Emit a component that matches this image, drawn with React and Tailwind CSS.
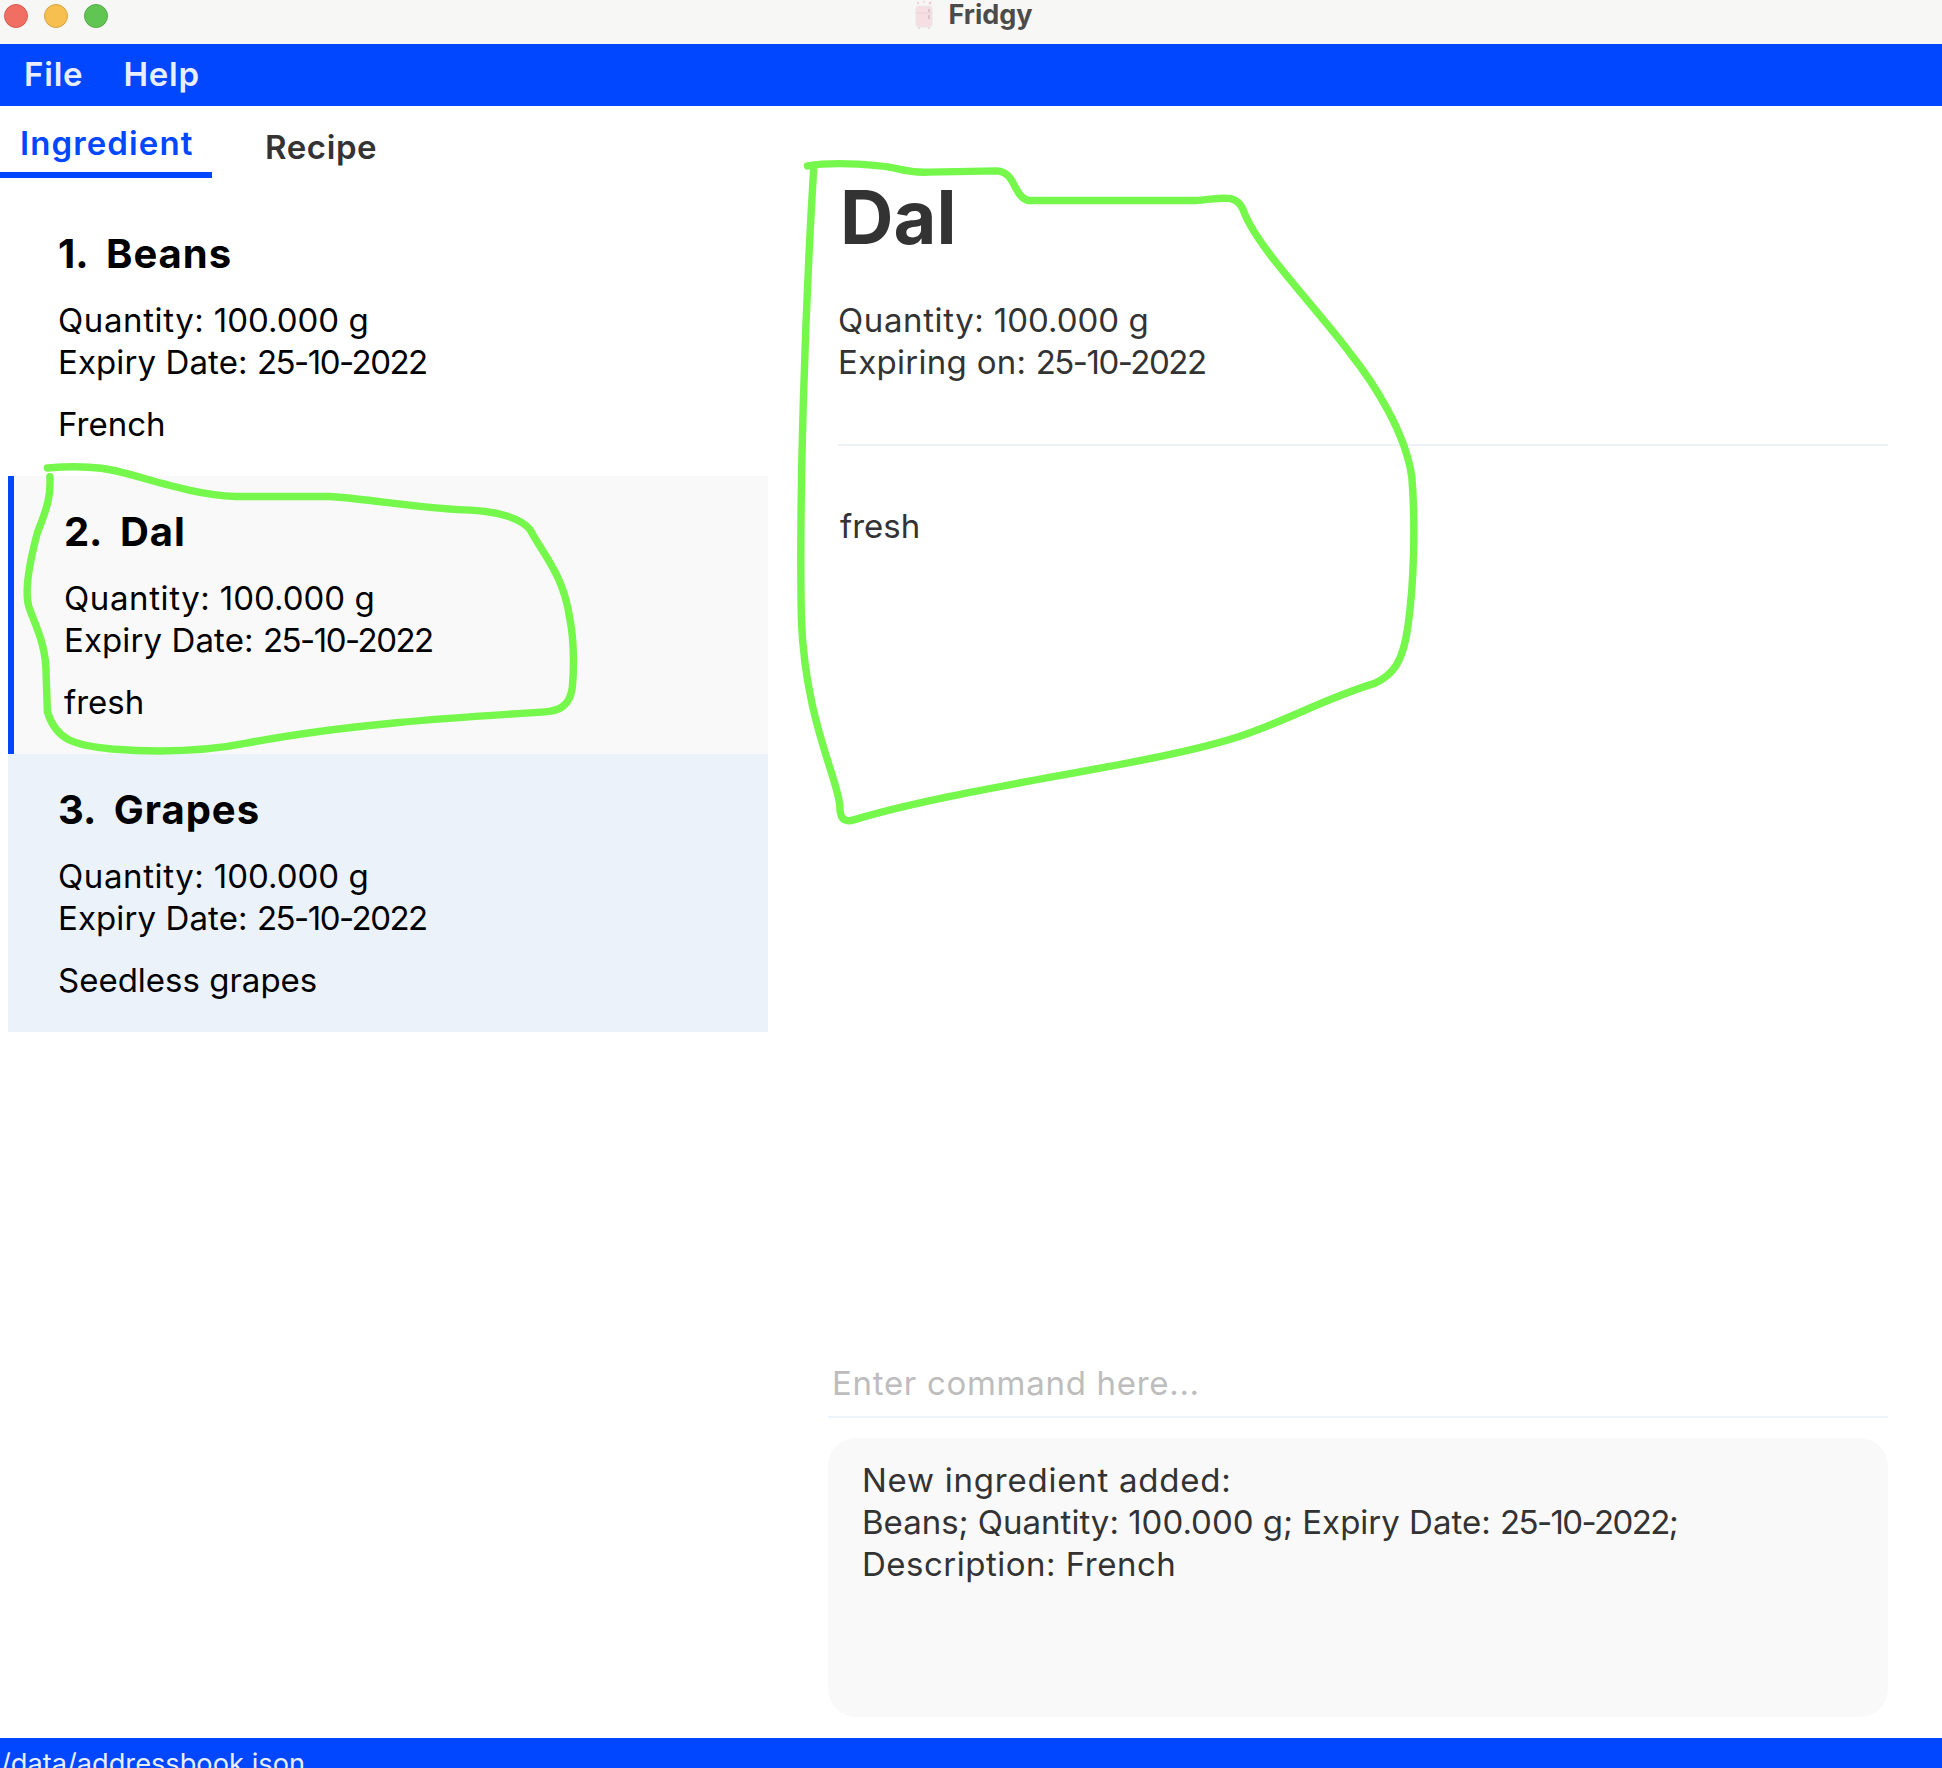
import React from 'react';

const ingredients = [
  { n: 1, name: 'Beans', desc: 'French' },
  { n: 2, name: 'Dal', desc: 'fresh', selected: true },
  { n: 3, name: 'Grapes', desc: 'Seedless grapes', alt: true },
];

const FridgeIcon = () => (
  <svg width="20" height="30" viewBox="0 0 20 30" fill="none">
    <circle cx="4" cy="3" r="1.4" fill="#f3d9de" />
    <circle cx="10" cy="2" r="1.4" fill="#f0e3e6" />
    <circle cx="16" cy="3" r="1.4" fill="#f3c9d2" />
    <rect x="2" y="6" width="16" height="21" rx="3" fill="#f6dfe3" stroke="#ece6e6" />
    <path d="M2 13H18" stroke="#e9d3d8" />
    <rect x="14" y="9" width="2" height="3" fill="#d8c5c9" />
    <rect x="14" y="15" width="2" height="4" fill="#d8c5c9" />
    <path d="M5 27v2M15 27v2" stroke="#e5e0e0" strokeWidth="2" />
  </svg>
);

const Scribbles = () => (
  <svg
    className="absolute top-0 left-0 pointer-events-none"
    width="1942"
    height="1768"
    viewBox="0 0 1568 1428"
    fill="none"
    stroke="#76f74c"
    strokeWidth="6"
    strokeLinecap="round"
    strokeLinejoin="round"
  >
    <path d="M38 378C60 376 80 376 100 382C130 390 160 400 190 401L265 401C300 403 340 411 380 412C400 413 420 418 428 428C440 450 455 465 460 500C464 520 463 545 462 555C460 570 452 574 440 575C360 580 280 585 200 600C170 606 130 608 90 605C60 602 45 598 38 575L37 545C37 520 28 505 23 490C20 480 22 460 30 430C38 410 41 400 40 385" />
    <path d="M652 134C670 131 690 132 710 134C725 135 730 140 750 139L805 138C820 139 818 158 830 162L965 162C985 161 998 155 1004 170C1015 200 1060 245 1090 285C1110 310 1135 350 1140 385C1143 420 1142 470 1137 505C1133 535 1125 545 1110 552C1070 564 1040 582 1000 595C930 618 780 635 690 662C680 665 678 660 678 650C675 625 650 580 647 500C645 400 650 250 657 135" />
  </svg>
);

// the date digits run narrower in the reference than in Inter
const DateText = () => <span className="tracking-[-1.5px]">25-10-2022</span>;

const IngredientCard = ({ item }) => {
  let box = 'h-[277px] pt-[32px]';
  if (item.selected) box = 'h-[278px] pt-[33px] bg-[#f9f9f9] border-l-[6px] border-[#0047ff]';
  if (item.alt) box = 'h-[278px] pt-[33px] bg-[#ebf2fa]';

  return (
    <div className={`pl-[50px] text-black ${box}`}>
      <div className="whitespace-pre text-[40px] leading-[46px] font-bold tracking-[1px]">
        <span className="tracking-[-0.1px]">{item.n}.{'  '}</span>{item.name}
      </div>
      <div className="mt-[22px] text-[33px] leading-[42px]">
        <div><span className="tracking-[0.6px]">Quantity:</span> 100.000 g</div>
        <div><span className="tracking-[0.1px]">Expiry Date:</span> <DateText /></div>
      </div>
      <div className="mt-[20px] text-[33px] leading-[42px]">{item.desc}</div>
    </div>
  );
};

export default function App() {
  return (
    <div className="relative flex h-[1768px] w-[1942px] flex-col overflow-hidden bg-white font-['Inter',sans-serif]">
      {/* title bar */}
      <div className="relative flex h-[44px] shrink-0 items-center justify-center bg-[#f7f7f5]">
        <div className="absolute left-[4px] top-[4px] flex gap-[16px]">
          <span className="h-[24px] w-[24px] rounded-full border border-[#dc5c52] bg-[#f16f62]" />
          <span className="h-[24px] w-[24px] rounded-full border border-[#dba546] bg-[#f6bf4f]" />
          <span className="h-[24px] w-[24px] rounded-full border border-[#52ad48] bg-[#61c554]" />
        </div>
        <div className="mb-[14px] ml-[5px] flex items-center gap-[14px] text-[27px] leading-[30px] font-bold text-[#4b4b4b]">
          <FridgeIcon />
          <span>Fridgy</span>
        </div>
      </div>

      {/* menu bar */}
      <div className="flex h-[62px] shrink-0 items-center gap-[40px] bg-[#0047ff] pl-[24px] text-[33px] font-semibold tracking-[0.8px] text-[#e8eeff]">
        <span>File</span>
        <span>Help</span>
      </div>

      <div className="flex min-h-0 flex-1">
        {/* left column */}
        <div className="w-[768px] shrink-0">
          <div className="flex h-[72px] items-start">
            <div className="h-[72px] w-[212px] border-b-[6px] border-[#0047ff] pl-[20px] pt-[16px] text-[33px] leading-[42px] font-semibold tracking-[1.1px] text-[#0047ff]">
              Ingredient
            </div>
            <div className="ml-[53px] pt-[20px] text-[33px] leading-[42px] font-semibold tracking-[0.6px] text-[#333333]">
              Recipe
            </div>
          </div>
          <div className="mt-[21px] ml-[8px]">
            {ingredients.map((item) => (
              <IngredientCard key={item.n} item={item} />
            ))}
          </div>
        </div>

        {/* right column */}
        <div className="flex min-w-0 flex-1 flex-col pl-[60px] pr-[54px] text-[#333333]">
          <div className="flex-1 pl-[10px]">
            <div className="border-b-2 border-[#edf2f7] pb-[61px]">
              <h1 className="pl-[2px] pt-[71px] text-[74px] leading-[80px] font-bold">Dal</h1>
              <div className="mt-[42px] text-[33px] leading-[42px]">
                <div><span className="tracking-[0.6px]">Quantity:</span> 100.000 g</div>
                <div><span className="tracking-[0.3px]">Expiring on:</span> <DateText /></div>
              </div>
            </div>
            <p className="mt-[59px] pl-[2px] text-[33px] leading-[42px]">fresh</p>
          </div>

          <div className="border-b-2 border-[#edf3fb] pb-[12px] pl-[4px] text-[33px] leading-[42px] tracking-[0.7px] text-[#bdbdbd]">
            Enter command here...
          </div>
          <div className="mt-[20px] mb-[21px] h-[279px] rounded-[28px] bg-[#f9f9f9] px-[34px] pt-[21px] text-[33px] leading-[42px]">
            <div className="tracking-[0.76px]">New ingredient added:</div>
            <div>Beans; Quantity: 100.000 g; Expiry Date: <span className="tracking-[-1.6px]">25-10-2022;</span></div>
            <div className="tracking-[0.5px]">Description: French</div>
          </div>
        </div>
      </div>

      {/* status bar */}
      <div className="h-[30px] shrink-0 overflow-hidden bg-[#0047ff] pl-[1px] pt-[8px] text-[27.2px] leading-[36px] text-[#e8eeff]">
        /data/addressbook.json
      </div>

      <Scribbles />
    </div>
  );
}
